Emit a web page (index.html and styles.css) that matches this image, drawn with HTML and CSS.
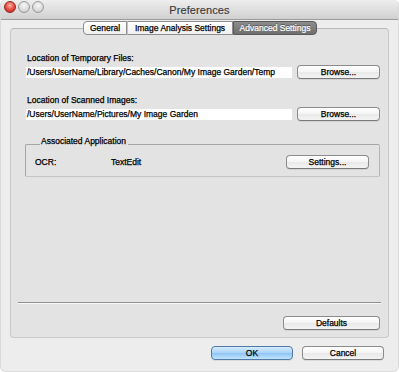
FILE: index.html
```html
<!DOCTYPE html>
<html>
<head>
<meta charset="utf-8">
<link rel="stylesheet" href="styles.css">
</head>
<body>
<div class="window">
  <div class="titlebar">
    <div class="lights">
      <span class="light close"></span>
      <span class="light"></span>
      <span class="light"></span>
    </div>
    <div class="title">Preferences</div>
  </div>
  <div class="tabs">
    <span class="tab first">General</span>
    <span class="tab">Image Analysis Settings</span>
    <span class="tab selected last">Advanced Settings</span>
  </div>
  <div class="panel">
    <div class="label">Location of Temporary Files:</div>
    <div class="row">
      <div class="field">/Users/UserName/Library/Caches/Canon/My Image Garden/Temp</div>
      <button class="btn browse">Browse...</button>
    </div>
    <div class="label second">Location of Scanned Images:</div>
    <div class="row">
      <div class="field">/Users/UserName/Pictures/My Image Garden</div>
      <button class="btn browse">Browse...</button>
    </div>
    <div class="group">
      <div class="legend">Associated Application</div>
      <div class="group-row">
        <span class="ocr">OCR:</span>
        <span class="app">TextEdit</span>
        <button class="btn settings">Settings...</button>
      </div>
    </div>
    <div class="separator"></div>
    <div class="defaults-row">
      <button class="btn defaults">Defaults</button>
    </div>
  </div>
  <div class="footer">
    <button class="btn primary">OK</button>
    <button class="btn">Cancel</button>
  </div>
</div>
</body>
</html>
```
FILE: styles.css
```css
* { box-sizing: border-box; }
html, body { margin: 0; padding: 0; }
body {
  width: 399px;
  height: 372px;
  background: #ffffff;
  font-family: "Liberation Sans", Arial, sans-serif;
  font-size: 8.5px;
  color: #000;
  -webkit-text-stroke: 0.25px #000;
}
.window {
  width: 399px;
  height: 372px;
  background: #ededed;
  border-radius: 5px 5px 6px 6px;
  border: 1px solid #dadada;
  border-top: none;
  overflow: hidden;
}
.titlebar {
  height: 20px;
  background: linear-gradient(#eeeeee, #d0d0d0);
  border-bottom: 1px solid #9c9c9c;
  display: flex;
  align-items: center;
  justify-content: center;
  position: relative;
}
.lights {
  position: absolute;
  left: 3px;
  top: 1px;
  display: flex;
  gap: 2px;
}
.light {
  width: 12px;
  height: 12px;
  border-radius: 50%;
  background: radial-gradient(circle at 50% 35%, #f8f8f8, #d4d4d4 70%, #bdbdbd);
  border: 1px solid #9a9a9a;
}
.light.close {
  background: radial-gradient(circle at 50% 35%, #ffb3a8, #e2463b 55%, #b8261e);
  border-color: #8e2a22;
}
.title {
  font-size: 11px;
  color: #3a3a3a;
  letter-spacing: 0.1px;
  -webkit-text-stroke: 0.15px #3a3a3a;
}
.tabs {
  display: flex;
  justify-content: center;
  margin-top: 1px;
  margin-left: 1px;
  position: relative;
  z-index: 1;
}
.tab {
  height: 14px;
  line-height: 12px;
  border: 1px solid #8e8e8e;
  border-left: 1px solid #c4c4c4;
  background: linear-gradient(#ffffff, #f1f1f1);
  font-size: 8.5px;
  padding: 0;
  text-align: center;
  color: #000;
}
.tab:nth-child(1) { width: 44px; }
.tab:nth-child(2) { width: 106px; }
.tab:nth-child(3) { width: 84px; }
.tab.first { border-left: 1px solid #8e8e8e; border-radius: 4px 0 0 4px; }
.tab.last { border-radius: 0 4px 4px 0; }
.tab.selected {
  background: linear-gradient(#8d8d8d, #6f6f6f);
  border-color: #5a5a5a;
  color: #ffffff;
  -webkit-text-stroke: 0.2px #ffffff;
  text-shadow: 0 -1px 0 #4a4a4a;
}
.panel {
  margin: -7px 9px 0 9px;
  height: 310px;
  background: #e3e3e3;
  border: 1px solid #c9c9c9;
  border-top-color: #b8b8b8;
  border-radius: 4px;
  padding: 24px 8px 6px 16px;
}
.label {
  height: 10px;
  line-height: 10px;
  margin-bottom: 2px;
}
.label.second { margin-top: 16px; }
.row {
  display: flex;
  align-items: center;
  height: 14px;
}
.field {
  width: 266px;
  height: 11px;
  line-height: 11px;
  background: #ffffff;
  margin-left: -1px;
  padding-left: 1px;
  white-space: nowrap;
  overflow: hidden;
}
.btn {
  font-family: "Liberation Sans", Arial, sans-serif;
  font-size: 8.5px;
  color: #000;
  -webkit-text-stroke: 0.25px #000;
  height: 14px;
  padding: 0;
  line-height: 12px;
  border: 1px solid #8c8c8c;
  border-bottom-color: #7a7a7a;
  border-radius: 4px;
  background: linear-gradient(#ffffff, #f4f4f4 50%, #e9e9e9 51%, #f3f3f3);
  box-shadow: 0 1px 0 rgba(0,0,0,0.08);
  text-align: center;
}
.browse { width: 83px; margin-left: auto; }
.group {
  margin: 23px 0 0 -2px;
  height: 33px;
  border: 1px solid #a6a6a6;
  border-right-color: #b4b4b4;
  border-bottom-color: #c4c4c4;
  border-radius: 2px;
  padding: 0 10px 0 9px;
}
.legend {
  display: inline-block;
  height: 10px;
  line-height: 10px;
  margin: -9px 0 0 5px;
  padding: 0 2px 0 1px;
  background: #e3e3e3;
  vertical-align: top;
}
.group-row {
  display: flex;
  align-items: center;
  height: 14px;
  margin-top: 0;
}
.ocr { width: 76px; }
.settings { width: 83px; margin-left: auto; }
.separator {
  margin: 125px -1px 0 -9px;
  height: 2px;
  border-top: 1px solid #8f8f8f;
  border-bottom: 1px solid #f8f8f8;
}
.defaults-row {
  display: flex;
  justify-content: flex-end;
  margin-top: 12px;
}
.defaults { width: 97px; }
.footer {
  display: flex;
  justify-content: flex-end;
  gap: 9px;
  margin-top: 8px;
  padding-right: 14px;
}
.footer .btn { width: 82px; }
.btn.primary {
  background: linear-gradient(#d6ecfd, #a8d3f8 50%, #8cc4f4 51%, #c3e5fd);
  border-color: #4f79a6;
}
```
